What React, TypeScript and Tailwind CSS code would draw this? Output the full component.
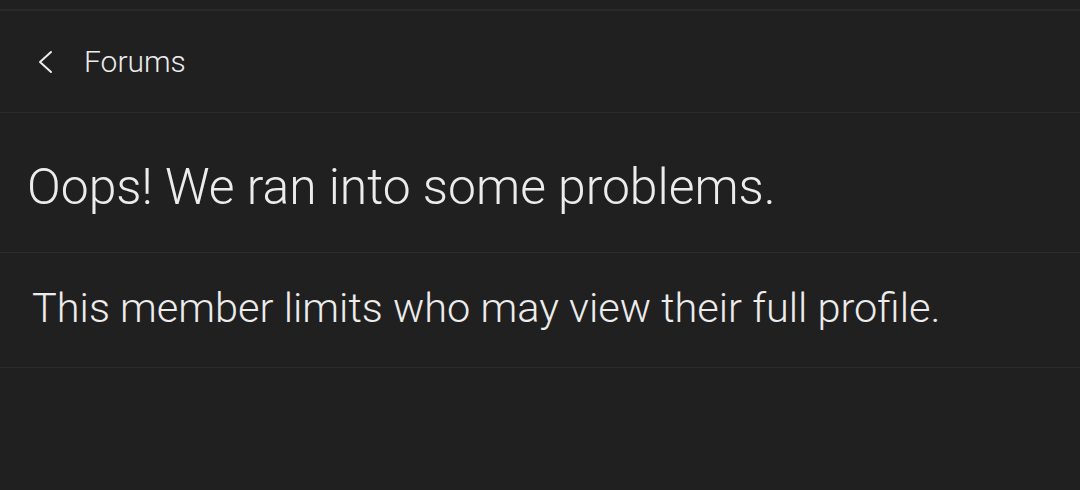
import React from "react";

export default function App() {
  return (
    <div
      className="w-[1080px] h-[490px] bg-[#202020] text-[#ececec] overflow-hidden"
      style={{ fontFamily: "Roboto, 'Noto Sans', sans-serif" }}
    >
      <div className="h-[9px]" />
      <div className="h-[2px] bg-[#2a2a2a]" />
      <div className="h-[102px] flex items-center border-b border-[#2c2c2c]">
        <div className="w-[84px] flex items-center pl-[37px]">
          <svg width="16" height="24" viewBox="0 0 16 24" fill="none">
            <path d="M14 2 L3 12 L14 22" stroke="#ececec" strokeWidth="2" strokeLinecap="round" strokeLinejoin="round" />
          </svg>
        </div>
        <span className="text-[30px] font-light leading-none">Forums</span>
      </div>
      <div className="h-[140px] flex items-center pl-[27px] pt-[10px] border-b border-[#2c2c2c]">
        <span className="text-[49.8px] font-light leading-none">Oops! We ran into some problems.</span>
      </div>
      <div className="h-[115px] flex items-center pl-[32px] pb-[4px] border-b border-[#2c2c2c]">
        <span className="text-[41.5px] font-light leading-none">This member limits who may view their full profile.</span>
      </div>
    </div>
  );
}
